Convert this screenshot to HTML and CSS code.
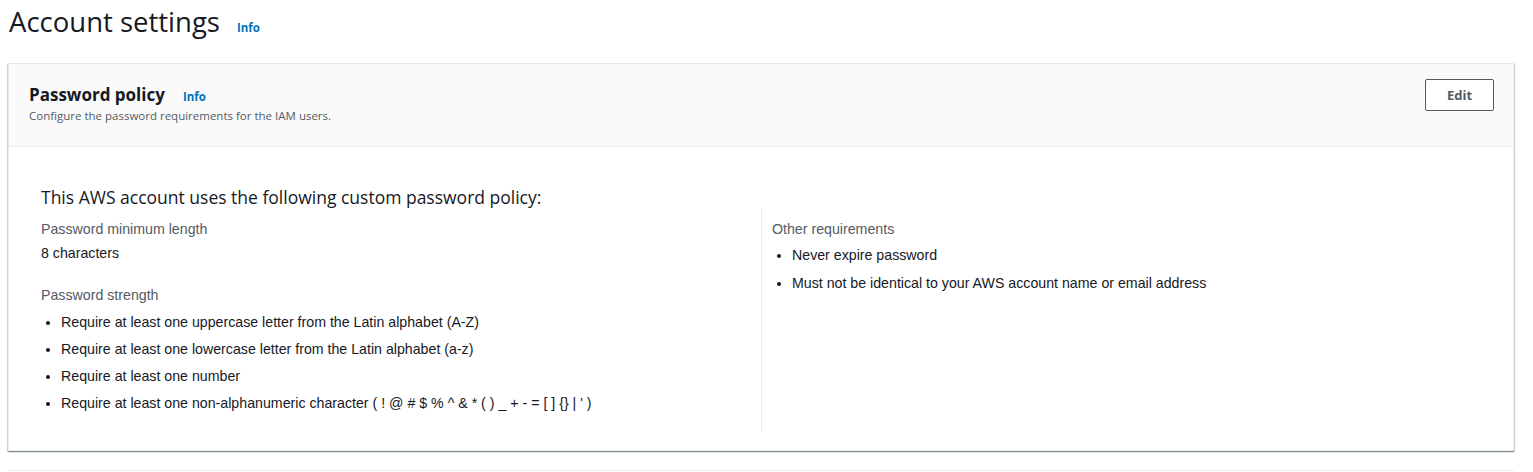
FILE: index.html
```html
<!DOCTYPE html>
<html lang="en">
<head>
<meta charset="utf-8">
<title>Account settings</title>
<link rel="stylesheet" href="styles.css">
</head>
<body>
<div class="page">
  <div class="page-header">
    <h1 class="page-title">Account settings</h1>
    <a class="info" href="#">Info</a>
  </div>

  <section class="card">
    <header class="card-header">
      <div class="card-heading">
        <div class="card-title-row">
          <h2 class="card-title">Password policy</h2>
          <a class="info" href="#">Info</a>
        </div>
        <p class="card-desc">Configure the password requirements for the IAM users.</p>
      </div>
      <button class="btn" type="button">Edit</button>
    </header>
    <div class="card-body">
      <h3 class="policy-title">This AWS account uses the following custom password policy:</h3>
      <div class="columns">
        <div class="col">
          <div class="label">Password minimum length</div>
          <div class="value">8 characters</div>
          <div class="label label-gap">Password strength</div>
          <ul class="list">
            <li>Require at least one uppercase letter from the Latin alphabet (A-Z)</li>
            <li>Require at least one lowercase letter from the Latin alphabet (a-z)</li>
            <li>Require at least one number</li>
            <li>Require at least one non-alphanumeric character ( ! @ # $ % ^ &amp; * ( ) _ + - = [ ] {} | ' )</li>
          </ul>
        </div>
        <div class="col col-right">
          <div class="label">Other requirements</div>
          <ul class="list list-right">
            <li>Never expire password</li>
            <li>Must not be identical to your AWS account name or email address</li>
          </ul>
        </div>
      </div>
    </div>
  </section>
  <div class="bottom-rule"></div>
</div>
</body>
</html>
```

FILE: styles.css
```css
* { box-sizing: border-box; }

html, body {
  margin: 0;
  padding: 0;
  background: #ffffff;
}

body {
  font-family: "Liberation Sans", Arial, sans-serif;
  font-size: 14.2px;
  color: #16191f;
}

.page {
  padding: 0 19px 0 8px;
}

.page-header {
  display: flex;
  align-items: baseline;
  height: 63px;
  padding-top: 3px;
}

.page-title {
  margin: 0 0 0 1px;
  font-family: "Open Sans", "Noto Sans", sans-serif;
  font-weight: 400;
  font-size: 27.5px;
  line-height: 38px;
  color: #16191f;
}

.info {
  font-family: "Open Sans", "Noto Sans", sans-serif;
  font-weight: 700;
  font-size: 11.5px;
  color: #0073bb;
  text-decoration: none;
  margin-left: 17px;
}

.card {
  border: 1px solid #eaeded;
  border-top-color: #e5e8e8;
  box-shadow: 0 1px 1px 0 rgba(0, 28, 36, 0.3), 1px 1px 1px 0 rgba(0, 28, 36, 0.15), -1px 1px 1px 0 rgba(0, 28, 36, 0.15);
  background: #ffffff;
  height: 388px;
}

.card-header {
  display: flex;
  justify-content: space-between;
  align-items: flex-start;
  background: #fafafa;
  border-bottom: 1px solid #eaeded;
  height: 83px;
  padding: 15px 19px 0 20px;
}

.card-title-row {
  display: flex;
  align-items: baseline;
  padding-top: 5px;
}

.card-title {
  margin: 0;
  font-family: "Open Sans", "Noto Sans", sans-serif;
  font-weight: 700;
  font-size: 17px;
  line-height: 22px;
  color: #16191f;
}

.card-title-row .info {
  margin-left: 18px;
}

.card-desc {
  margin: 1px 0 0 0;
  font-family: "Open Sans", "Noto Sans", sans-serif;
  font-size: 11.5px;
  line-height: 17px;
  color: #545b64;
}

.btn {
  width: 69px;
  height: 32px;
  background: #ffffff;
  border: 1px solid #545b64;
  border-radius: 2px;
  font-family: "Open Sans", "Noto Sans", sans-serif;
  font-weight: 700;
  font-size: 13px;
  color: #545b64;
  padding: 0;
}

.card-body {
  padding: 39px 32px 0 32px;
}

.policy-title {
  margin: 0;
  font-family: "Open Sans", "Noto Sans", sans-serif;
  font-weight: 400;
  font-size: 17.5px;
  line-height: 23px;
  color: #16191f;
}

.columns {
  display: grid;
  grid-template-columns: 720px 1fr;
}

.col {
  padding-top: 10px;
  padding-bottom: 15px;
  min-height: 222px;
}

.col-right {
  border-left: 1px solid #eaeded;
  padding-left: 10px;
}

.label {
  color: #545b64;
  line-height: 20px;
}

.value {
  line-height: 20px;
  margin-top: 4px;
}

.label-gap {
  margin-top: 22px;
}

.list {
  margin: 7px 0 0 0;
  padding-left: 20px;
}

.list li {
  line-height: 20px;
  margin-bottom: 7px;
}

.list li:last-child {
  margin-bottom: 0;
}

.list-right {
  margin-top: 6px;
}

.list-right li {
  margin-bottom: 8px;
}

.bottom-rule {
  margin-top: 19px;
  border-top: 1px solid #eaeded;
}
```
